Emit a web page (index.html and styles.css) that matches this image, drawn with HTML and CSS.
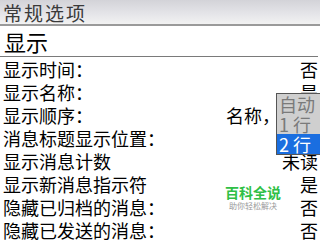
FILE: index.html
```html
<!DOCTYPE html>
<html>
  <head>
    <meta name="viewport" content="width=device-width, initial-scale=1.0" />
    <link rel="stylesheet" href="styles.css">
  </head>

  <body>
    <div class="screen">
      <!--title bar-->
      <div class="title-bar">常规选项</div>

      <div class="section">显示</div>

      <div class="options">
        <div class="row"><span>显示时间：</span><span>否</span></div>
        <div class="row"><span>显示名称：</span><span>是</span></div>
        <div class="row with-list"><span>显示顺序：</span><span>名称，</span></div>
        <div class="row"><span>消息标题显示位置：</span><span></span></div>
        <div class="row"><span>显示消息计数</span><span>未读</span></div>
        <div class="row"><span>显示新消息指示符</span><span>是</span></div>
        <div class="row"><span>隐藏已归档的消息：</span><span>否</span></div>
        <div class="row"><span>隐藏已发送的消息：</span><span>否</span></div>
      </div>

      <!--dropdown that is open over the rows-->
      <div class="choice-list">
        <div class="choice">自动</div>
        <div class="choice">1 行</div>
        <div class="choice selected">2 行</div>
      </div>

      <div class="watermark">
        <div class="wm-title">百科全说</div>
        <div class="wm-sub">助你轻松解决</div>
      </div>
    </div>
  </body>
</html>
```

FILE: styles.css
```css
body {
  margin: 0;
  background: #fff;
}

.screen {
  position: relative;
  width: 320px;
  height: 240px;
  overflow: hidden;
  font-family: "Noto Sans CJK SC", "DejaVu Sans", sans-serif;
  color: #000;
}

.title-bar {
  height: 24px;
  line-height: 26px;
  padding-left: 3px;
  font-size: 19px;
  letter-spacing: 2px;
  color: #3a3a3a;
  background: linear-gradient(#d3d3d8, #e4e4e8 55%, #f2f2f2);
  border-bottom: 2px solid #9a9a9a;
}

.section {
  height: 30px;
  line-height: 30px;
  padding-left: 4px;
  font-size: 22px;
  border-bottom: 1px solid #7a7a7a;
  margin-right: 2px;
}

.options {
  padding-top: 1px;
}

.row {
  display: flex;
  justify-content: space-between;
  height: 23px;
  line-height: 23px;
  padding: 0 2px 0 3px;
  font-size: 18px;
}

/*value sits just left of the open list*/
.row.with-list {
  padding-right: 40px;
}

/*the open list for the title position*/
.choice-list {
  position: absolute;
  left: 276px;
  top: 93px;
  width: 46px;
  border: 1px solid #555;
  background: #cfcfcf;
}

.choice {
  height: 20px;
  line-height: 20px;
  padding-left: 2px;
  font-size: 18px;
  white-space: nowrap;
  color: #7a7a7a;
}

.choice.selected {
  height: 20px;
  background: #1a6ee0;
  color: #fff;
}

.watermark {
  position: absolute;
  left: 225px;
  top: 184px;
  text-align: center;
}

.wm-title {
  font-size: 14px;
  line-height: 17px;
  font-weight: bold;
  color: #2fbf46;
}

.wm-sub {
  font-size: 8px;
  line-height: 10px;
  color: #9a9a9a;
}
```
